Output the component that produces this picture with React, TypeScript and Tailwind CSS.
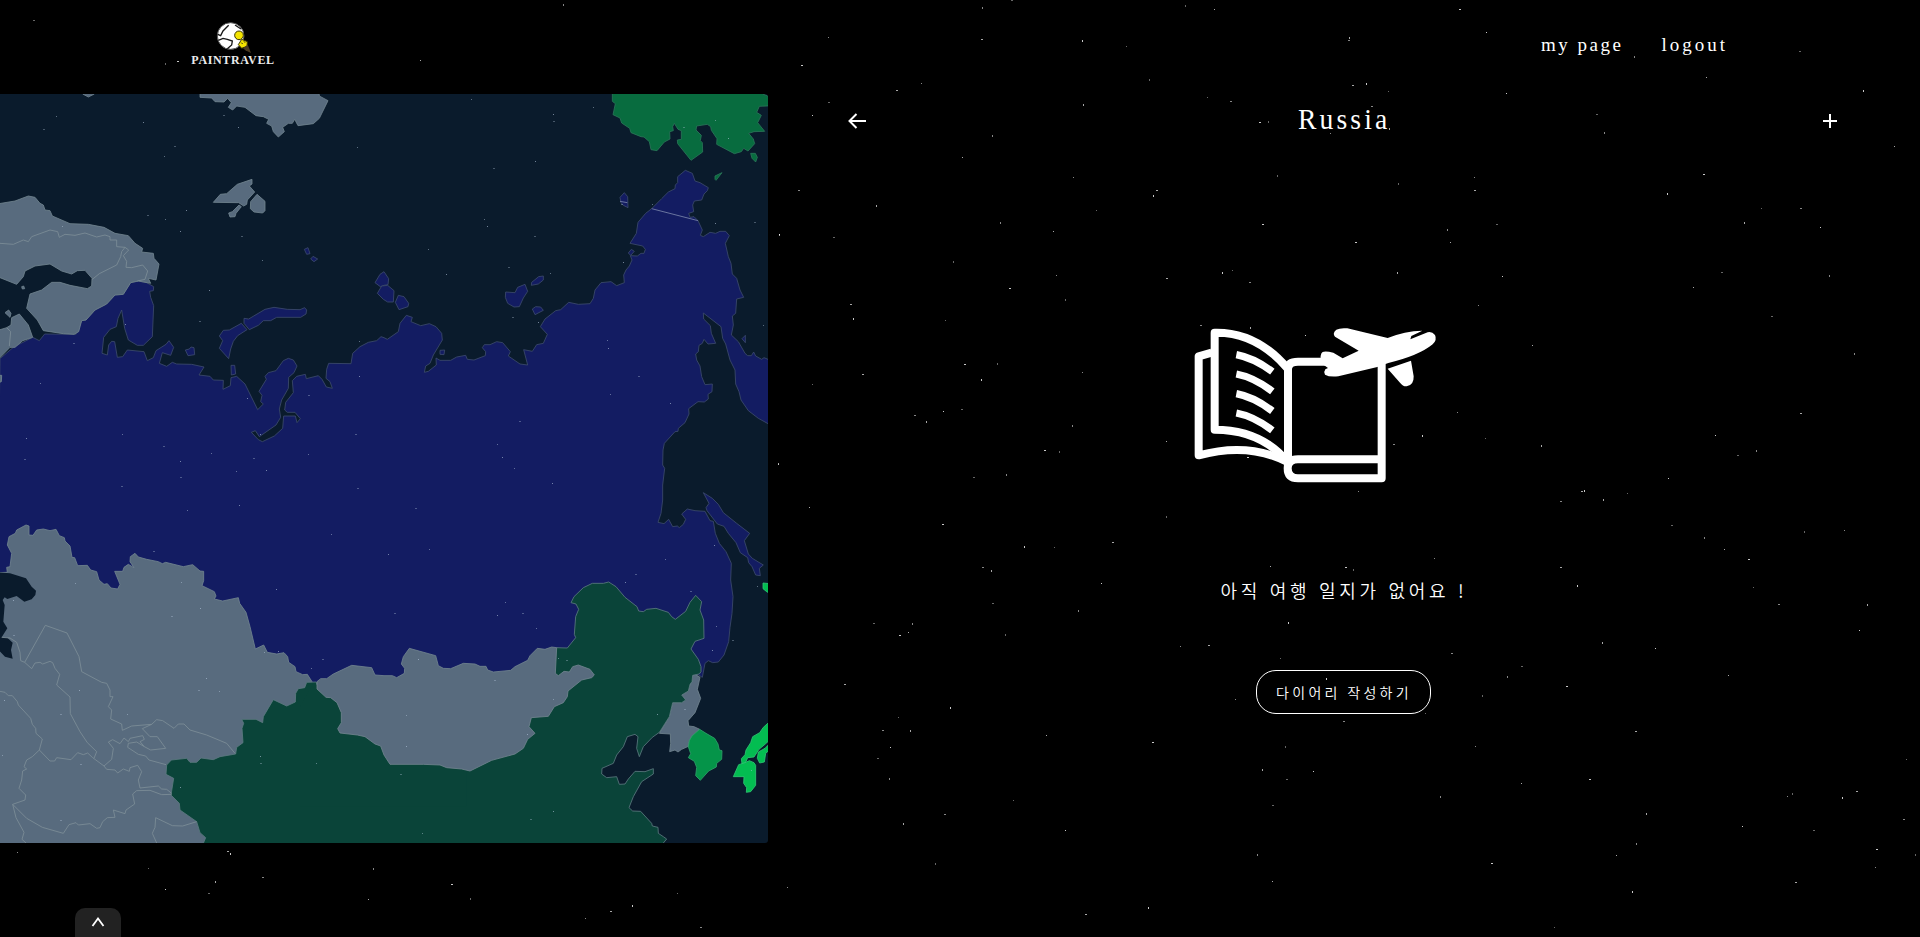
import React from "react";

type Point = [number, number];

// Sky sectors: each keeps its own grid, projected on the page by an origin and a scale.
const skySectors: { origin: Point; scale: Point; stars: string }[] = [
  {
    origin: [768, 0],
    scale: [0.7347, 0.3333],
    stars:
      "332,1 292,24 608,28 941,28 568,17 82,112 290,120 428,123 488,139 790,121 792,113 978,97 1404,155 1179,169 1278,232 46,197 519,239 209,250 175,272 1491,273 598,292 629,306 429,314 61,346 83,308 306,407 265,472 669,368 681,365 765,401 795,256 814,250 844,274 821,321 846,386 1005,281 1127,345 1138,397 1533,439 1273,524 694,527 416,533 529,572 525,588 447,632 41,573 147,616 16,703 89,714 316,668 388,696 673,673 858,551 962,532 962,573 1224,582 1352,626 1405,627 1329,669 1432,683 992,675 925,690 929,728 799,728 253,785 392,826 543,835 619,818 632,813 656,848 857,819 1000,831 1298,819 1445,827 1260,864 329,867 405,899 967,916 112,914 116,957 241,963 589,978 657,984 732,1006 1366,951 1479,1061 1041,1038 268,1094 313,1092 428,1117 128,1125 291,1139 61,1154 200,1247 216,1264 239,1235 263,1230 415,1278 543,1325 377,1352 397,1356 939,1237 1406,1241 891,1308 977,1317 851,1333 1053,1338 1290,1308 1320,1366 1346,1353 14,1392 652,1373",
  },
  {
    origin: [768, 468],
    scale: [0.7347, 0.3333],
    stars:
      "280,28 325,20 57,118 238,171 543,145 804,70 1107,70 1112,69 1170,76 1079,102 1137,96 1226,31 1230,172 1275,208 1302,245 1334,275 1411,191 1465,189 469,223 349,236 390,239 292,298 304,309 454,346 305,406 423,427 684,297 786,299 797,304 907,271 1078,298 1102,354 1342,358 1376,410 1497,410 1486,488 143,467 196,466 191,493 179,503 323,499 562,537 600,534 709,464 697,571 930,556 1136,524 1208,543 1025,597 1007,625 1307,623 1087,655 972,684 636,694 104,649 249,718 177,750 156,788 194,787 167,840 149,872 166,932 379,804 524,823 704,837 963,837 1181,790 760,632 895,738 783,762 673,905 743,912 706,934 915,987 1025,948 1118,936 1394,977 1388,987 1481,970 1462,989 1549,876 1546,1055 1196,1038 1326,1077 1423,1088 1182,1126 1155,1162 1509,1144 1562,1160 1507,1199 1398,1245 1177,1271 334,998 240,1040 184,1066 405,1088 687,1014 666,1160 686,1241 985,1188 228,1188 27,1260 432,1339 518,1318 1071,1378",
  },
  {
    origin: [0, 0],
    scale: [1, 1],
    stars:
      "33,20 563,4 420,60 177,61 165,63 17,852 227,851 230,853 148,868 262,877 215,881 165,889 208,893 373,868 368,899 451,884 470,898 585,918 610,911 632,905 677,893 700,927 779,234 778,464",
  },
];

const mapStars =
  "129,118 168,79 430,97 523,170 493,198 716,111 670,76 1071,172 560,361 442,375 496,389 541,425 724,439 787,511 628,600 598,694 188,409 377,704 219,759 121,880 743,926 925,916 1078,755 1078,858 1066,1033 925,1094 780,1032 761,1104 634,1089 540,1114 489,1069 367,1033 80,1044 74,1107 1414,27 1661,72 1661,93 1781,51 1605,214 1479,236 1453,387 1461,409 1604,438 1284,478 1339,554 1525,533 1652,550 1870,517 1864,343 1957,343 2145,400 2264,397 2289,706 1614,698 1537,682 1821,750 1824,774 1916,858 1830,912 2011,940 1557,995 1492,1063 1507,1103 2050,113 2145,91 2185,144 541,1162 710,1145 798,1142 365,1190 562,1260 718,1247 1071,1194 993,1334 829,1498 459,1385 544,1477 600,1554 515,1579 226,1480 39,1531 39,1636 793,1687 836,1684 966,1709 933,1735 619,1765 595,1801 658,1804 238,1801 182,1874 383,1873 14,1831 242,2023 8,1997 782,1998 780,2021 949,2020 541,2093 181,2191 1543,1135 1657,1179 1247,1254 1289,1379 1164,1393 1183,1571 1515,1538 1492,1577 1567,1571 1608,1614 1876,1477 1906,1453 1996,1407 2144,1365 2072,1505 2150,1610 2138,1680 2197,1651 2272,1490 1255,1708 1484,1771 1218,1875 1218,1969 1200,2053 1659,1829 1582,1933 1699,1712 1675,1705 1973,1872 2054,1859 2253,2040 1659,2163 1591,2188 1268,2230";

const parse = (list: string): Point[] =>
  list.split(" ").map((pair) => pair.split(",").map(Number) as Point);

const russia =
  "0,806 40,772 98,742 118,752 134,732 228,733 245,692 258,690 285,660 320,642 345,615 370,613 392,578 415,573 440,578 461,590 460,602 449,604 452,622 461,647 457,740 430,766 412,766 385,750 374,715 365,660 354,685 349,710 330,718 311,742 306,790 322,795 326,765 335,754 344,755 352,802 368,800 382,780 432,785 442,812 460,803 468,782 498,763 507,752 521,772 512,796 487,788 478,820 500,829 517,817 530,822 575,823 612,831 597,855 630,859 640,870 670,871 669,898 691,887 693,863 710,859 735,882 773,959 790,942 782,935 786,916 777,904 799,868 795,859 805,848 828,842 850,812 865,805 880,810 891,828 882,848 866,862 865,895 845,930 838,957 842,982 828,1005 778,1040 766,1022 754,1027 775,1049 787,1055 823,1038 848,1015 851,978 886,978 891,998 901,986 885,967 862,967 854,960 857,937 880,908 877,872 890,859 916,853 919,866 955,857 966,868 979,891 997,895 990,875 978,865 980,838 986,820 1053,821 1058,790 1080,770 1105,757 1130,752 1143,740 1152,743 1162,748 1195,725 1200,700 1219,676 1237,682 1233,695 1262,707 1288,701 1308,710 1325,730 1327,750 1300,795 1290,820 1277,828 1273,847 1285,844 1309,825 1308,804 1320,811 1352,811 1370,801 1397,796 1402,808 1422,810 1456,797 1457,785 1447,773 1453,764 1470,764 1490,755 1508,758 1531,785 1525,798 1560,822 1583,825 1571,779 1597,784 1610,764 1630,760 1642,733 1621,710 1635,687 1667,662 1682,659 1706,637 1735,643 1770,641 1780,625 1785,600 1803,578 1833,575 1850,587 1873,578 1871,555 1878,540 1888,528 1896,510 1891,497 1912,498 1923,490 1932,490 1936,478 1928,468 1890,460 1909,430 1914,397 1937,370 1955,356 1985,326 2005,306 2025,296 2026,285 2033,278 2033,260 2056,241 2077,250 2085,273 2100,278 2125,293 2122,302 2112,312 2105,330 2083,333 2078,345 2081,365 2066,370 2070,382 2082,380 2094,392 2107,420 2101,436 2110,440 2130,427 2147,430 2160,424 2177,424 2188,437 2176,460 2185,500 2193,520 2197,552 2210,565 2220,600 2231,622 2210,627 2207,670 2197,678 2200,705 2194,735 2215,755 2235,790 2243,797 2254,797 2261,786 2267,798 2285,808 2292,803 2304,808 2320,808 2320,1010 2304,1001 2275,985 2245,962 2223,930 2217,905 2207,882 2205,840 2190,810 2177,762 2168,745 2163,710 2110,669 2111,687 2131,707 2134,730 2147,760 2124,762 2112,748 2107,760 2097,766 2095,785 2087,792 2090,810 2100,828 2105,860 2115,884 2137,882 2136,905 2124,913 2125,927 2113,936 2094,935 2066,956 2067,972 2055,998 2035,1015 2034,1024 2025,1025 1993,1060 1989,1080 1988,1125 1994,1135 1988,1185 1988,1230 1983,1270 1974,1297 1992,1301 2006,1288 2018,1310 2032,1308 2038,1313 2050,1303 2057,1288 2045,1272 2062,1257 2085,1262 2115,1264 2130,1292 2140,1294 2146,1330 2158,1360 2178,1385 2194,1420 2192,1470 2199,1520 2196,1570 2190,1612 2186,1655 2172,1695 2155,1716 2138,1718 2125,1712 2115,1720 2107,1762 2096,1755 1900,1750 1100,1800 900,1800 -9,1500";

const russianIslands = [
  "732,685 746,687 795,658 822,652 862,658 900,659 914,653 920,660 918,672 902,682 830,682 812,692 790,692 775,706 748,719 732,700",
  "658,738 670,721 688,720 724,700 741,719 713,737 700,754 692,777 686,806 658,775 668,752",
  "556,780 568,777 573,771 582,773 584,794 564,797",
  "693,826 704,826 707,852 694,855",
  "913,478 924,473 930,491 920,493",
  "932,507 939,499 953,507 942,515",
  "1125,578 1140,553 1152,545 1166,566 1164,584 1152,586 1141,590",
  "1145,588 1163,586 1182,602 1180,636 1163,636 1150,628 1132,610",
  "1195,616 1212,620 1226,640 1224,650 1197,659 1186,637",
  "1517,606 1545,608 1553,592 1575,583 1583,604 1570,624 1558,650 1542,651 1523,640 1516,622",
  "1595,577 1616,560 1630,558 1630,570 1615,582 1594,586",
  "1597,657 1607,650 1622,651 1630,661 1605,674",
  "1860,322 1873,308 1883,320 1884,353 1870,346 1863,338",
  "1885,489 1894,478 1903,484 1892,496",
  "1320,781 1334,780 1332,794 1320,793",
  "2226,746 2236,736 2236,758",
  "2110,1208 2137,1225 2155,1243 2170,1268 2210,1300 2249,1330 2233,1352 2245,1392 2257,1405 2290,1425 2278,1435 2281,1457 2267,1455 2256,1430 2246,1418 2243,1403 2221,1388 2208,1358 2185,1330 2172,1309 2152,1302 2121,1262 2118,1253 2127,1240",
];

const china =
  "920,1777 949,1776 951,1790 1100,1850 1250,1960 1400,1950 1670,1673 1702,1674 1727,1643 1723,1633 1727,1580 1736,1558 1728,1542 1713,1538 1722,1520 1750,1493 1777,1480 1810,1480 1826,1476 1848,1490 1875,1522 1911,1550 1916,1563 1930,1565 1940,1558 1968,1555 2005,1567 2015,1580 2026,1588 2057,1564 2070,1537 2087,1516 2105,1535 2100,1560 2111,1590 2112,1645 2085,1654 2073,1677 2095,1708 2103,1730 2103,1745 2098,1752 2078,1756 2076,1775 2070,1783 2065,1803 2045,1815 2057,1830 2045,1838 2018,1838 2008,1880 1978,1927 1957,1942 1930,1970 1918,2000 1910,1975 1914,1940 1905,1933 1882,1940 1870,1970 1850,1995 1840,2020 1806,2035 1805,2052 1820,2063 1850,2060 1858,2083 1875,2082 1885,2067 1905,2044 1935,2045 1960,2036 1960,2052 1925,2075 1900,2120 1887,2153 1898,2163 1922,2164 1955,2200 1957,2208 1974,2212 1975,2230 1990,2240 2000,2247 1985,2265 608,2265 617,2243 600,2228 590,2195 540,2160 538,2140 513,2115 521,2065 498,2053 500,2025 514,2010 560,2005 570,2017 590,2017 603,2004 640,2009 660,2000 707,1992 710,1972 729,1958 726,1915 731,1900 725,1888 768,1888 788,1898 790,1880 820,1829 860,1848 886,1836 887,1810 895,1796 914,1793";

const mongolia =
  "951,1775 962,1766 980,1766 1000,1752 1055,1726 1115,1733 1125,1755 1152,1757 1177,1757 1190,1763 1213,1750 1214,1735 1204,1722 1210,1700 1228,1675 1307,1697 1315,1727 1330,1735 1352,1736 1390,1720 1425,1722 1440,1729 1458,1729 1463,1740 1480,1746 1532,1741 1545,1730 1583,1711 1590,1697 1612,1675 1635,1678 1655,1671 1670,1673 1666,1750 1675,1757 1692,1744 1708,1746 1718,1730 1735,1725 1770,1738 1783,1755 1775,1763 1745,1770 1704,1803 1702,1820 1690,1838 1663,1850 1645,1879 1594,1883 1587,1910 1605,1930 1583,1948 1570,1975 1545,1992 1475,2011 1410,2043 1385,2037 1340,2033 1320,2025 1270,2023 1170,2023 1152,1995 1142,1968 1125,1962 1095,1940 1072,1935 1020,1929 1013,1916 1024,1898 1024,1868 1011,1838 992,1823 978,1822 951,1797";

// Lies under the southern edge of Mongolia so both borders meet without a gap.
const northChina = "940,1780 1100,1850 1400,1900 1400,2150 900,2150 900,1850";

const centralAsia =
  "-9,1448 22,1447 20,1432 30,1430 35,1390 22,1365 27,1340 46,1330 50,1320 78,1305 87,1308 87,1335 99,1336 110,1320 130,1317 150,1322 168,1318 178,1337 193,1343 195,1353 210,1368 216,1402 224,1403 233,1427 262,1426 272,1440 290,1445 297,1470 312,1483 322,1481 333,1494 353,1497 360,1483 344,1444 368,1444 372,1432 385,1423 402,1433 390,1415 391,1400 405,1390 415,1401 440,1408 475,1415 487,1421 497,1417 550,1430 578,1424 600,1443 611,1444 611,1472 606,1487 643,1505 648,1518 643,1527 668,1533 715,1523 719,1540 738,1567 750,1610 766,1677 791,1665 802,1687 830,1692 852,1688 863,1700 866,1717 885,1730 888,1745 908,1754 922,1753 936,1775 922,1800 900,1860 700,2020 560,2050 640,2265 -9,2265";

const paleLands = [
  "-9,342 45,333 85,318 105,322 120,340 130,345 135,360 150,362 157,378 210,401 265,403 312,412 345,430 385,437 405,460 428,475 425,486 460,490 462,505 477,522 468,570 445,565 452,580 415,573 392,578 370,613 345,615 320,642 285,660 258,690 245,692 236,725 222,733 190,731 130,722 112,690 80,655 90,612 125,600 155,577 180,577 210,586 262,596 275,588 276,565 255,541 232,542 215,552 185,543 150,522 105,528 75,543 70,560 50,583 0,563 -9,563",
  "-9,812 30,772 45,772 68,752 98,742 85,705 58,672 35,683 33,705 20,713 -9,722",
  "15,668 26,660 33,670 30,682",
  "65,590 71,588 74,596 67,597",
  "-9,856 5,856 4,875 -9,880",
  "600,-9 600,22 635,24 645,35 672,36 683,25 694,38 685,52 698,60 710,48 735,52 768,77 790,80 806,88 800,100 815,108 820,125 835,141 853,125 848,112 865,100 877,100 884,88 894,107 940,101 958,85 984,32 958,18 955,-9",
  "245,-9 248,12 265,21 283,12 283,-9",
  "640,337 661,313 680,311 712,283 756,268 756,282 748,288 764,306 742,330 740,343 731,348 716,338",
  "717,345 724,350 708,370 705,380 690,381 686,369 697,365",
  "771,313 795,334 795,362 788,369 762,366 751,356 752,335",
  "2078,1756 2085,1753 2100,1762 2092,1798 2102,1825 2085,1868 2064,1892 2066,1908 2082,1910 2099,1918 2076,1938 2066,1960 2067,1968 2045,1978 2034,1986 2025,1980 2009,1985 2012,1960 2011,1932 1978,1930 2008,1880 2018,1838 2045,1838 2057,1830 2045,1815 2065,1803 2070,1783 2076,1775",
];

const caspian =
  "-9,1447 30,1450 78,1465 95,1490 108,1502 106,1515 95,1528 73,1535 50,1518 22,1527 14,1522 8,1530 14,1545 10,1595 22,1615 5,1642 22,1643 38,1658 33,1680 38,1706 15,1700 -9,1675";

const borders = [
  "0,460 40,463 70,450 85,455 95,440 150,420 173,425 178,442 195,433 225,436 255,429 290,441 315,435 330,440 330,450 350,450 350,470 375,472 386,480 370,497 380,514 378,532 395,533 428,525 443,543 435,568 412,573",
  "277,568 298,551 350,525 362,500 365,485 375,472",
  "20,713 32,725 28,768",
  "5,1642 30,1644 50,1657 60,1687 62,1712 74,1717 95,1736 105,1719 120,1717 128,1722 150,1714 158,1718 165,1735 179,1753 170,1785 210,1821 211,1871 240,1925 262,1958 290,1985 282,2005",
  "74,1717 136,1606 201,1629 237,1700 245,1745 305,1777 320,1780 330,1800 330,1820 339,1820 325,1850 335,1860 332,1887 365,1902 367,1921 395,1908 455,1903 470,1889 488,1892 522,1915 535,1902 552,1902 570,1920 620,1935 680,1960 705,1990",
  "0,1804 15,1807 25,1817 37,1817 52,1835 55,1845 92,1885 97,1903 107,1915 108,1930 127,1947 118,1980 97,2000 80,2010 72,2030 80,2037 68,2043 65,2070 57,2095 77,2115 75,2130 38,2143 48,2183 72,2227 66,2248 78,2259",
  "118,1980 150,2013 164,2013 170,2003 213,2009 233,1988 250,1994 263,1989 278,2003 312,2028 320,2038 345,2040 353,2049 370,2037 388,2044 390,2033 413,2026 425,2045 415,2070 420,2094 475,2088 485,2097 500,2098 515,2110",
  "312,2028 335,2008 340,1975 325,1956 338,1949 360,1961 372,1944 385,1955 390,1945 428,1937 433,1948 420,1955 433,1970 410,1956 385,1960 383,1972 415,1993 437,1998 447,2010 498,2024",
  "455,1903 427,1916 450,1940 472,1940 497,1975 452,1980 433,1970",
  "38,2143 80,2185 127,2212 190,2230 207,2204 228,2198 235,2205 270,2201 290,2215 300,2213 308,2195 322,2183 345,2182 340,2160 375,2171 378,2160 404,2142 398,2112 410,2102 450,2101 485,2114 515,2113",
  "470,2259 457,2230 465,2212 467,2183 517,2207 548,2208 590,2195",
];

const alaska = [
  "1837,-9 1837,34 1846,41 1839,74 1860,84 1865,99 1889,115 1893,128 1923,140 1932,141 1948,155 1953,179 1971,182 1993,156 2010,147 2009,125 2020,122 2018,110 2023,100 2034,118 2044,122 2044,148 2032,150 2033,161 2073,211 2108,186 2107,158 2101,152 2104,136 2088,120 2090,108 2122,103 2132,110 2134,121 2151,146 2150,163 2203,191 2224,185 2231,175 2244,183 2264,161 2260,147 2246,130 2262,125 2294,124 2273,98 2284,76 2270,67 2278,49 2320,47 2320,25 2288,12 2288,-9",
  "2145,258 2166,248 2148,271 2145,268",
  "2252,190 2266,190 2272,202 2267,216 2256,205",
];

const southKorea =
  "2099,1918 2118,1930 2144,1945 2154,1962 2158,1980 2166,1982 2165,2008 2150,2020 2149,2031 2126,2043 2101,2071 2087,2057 2090,2032 2083,2014 2065,2003 2072,1991 2065,1970 2068,1952 2076,1938";

const japan = [
  "2320,1885 2290,1912 2279,1928 2258,1940 2252,1958 2238,1980 2235,1994 2224,2006 2226,2022 2237,2017 2243,2003 2262,2001 2277,1978 2296,1962 2320,1940",
  "2320,1950 2295,1975 2275,1986 2272,2005 2279,2019 2293,2016 2297,1990 2320,1970",
  "2216,2024 2235,2018 2248,2012 2262,2018 2267,2026 2267,2086 2252,2105 2239,2107 2240,2093 2231,2080 2232,2060 2200,2060",
  "2289,1479 2320,1482 2320,1516 2300,1505 2289,1496",
];

function StarField() {
  return (
    <svg className="pointer-events-none absolute inset-0" width="1920" height="937" viewBox="0 0 1920 937" aria-hidden>
      {skySectors.flatMap((sector, s) =>
        parse(sector.stars).map(([x, y], i) => (
          <rect
            key={`${s}-${i}`}
            x={Math.floor(sector.origin[0] + x * sector.scale[0])}
            y={Math.floor(sector.origin[1] + y * sector.scale[1])}
            width={i % 3 === 0 ? 2 : 1}
            height={i % 3 === 1 ? 2 : 1}
            fill="#fff"
            fillOpacity={0.4 + (i % 4) * 0.13}
          />
        )),
      )}
    </svg>
  );
}

function WorldMap() {
  return (
    <svg className="block" width="768" height="749" viewBox="0 12 2304 2247">
      <rect x="0" y="12" width="2304" height="2247" fill="#0a1b2c" />
      <g strokeWidth="2.5" strokeLinejoin="round">
        <g fill="#131c62" stroke="#3c4a6c">
          <polygon points={russia} />
          {russianIslands.map((p) => (
            <polygon key={p} points={p} />
          ))}
          <path d="M1955 356L2094 392M1860 334L1882 338" stroke="#69749f" strokeWidth="3" />
        </g>
        <g fill="#586b7e" stroke="#71848f">
          {paleLands.map((p) => (
            <polygon key={p} points={p} />
          ))}
          <polygon points={centralAsia} />
        </g>
        <polygon points={caspian} fill="#0a1b2c" />
        <polygon points={china} fill="#0a4439" stroke="#5c7a80" />
        <polygon points={northChina} fill="#0a4439" />
        <polygon points={mongolia} fill="#586b7e" stroke="#71848f" />
        <g fill="none" stroke="#7d8e98">
          {borders.map((p) => (
            <polyline key={p} points={p} />
          ))}
        </g>
        <g fill="#086c3f" stroke="#2b7659">
          {alaska.map((p) => (
            <polygon key={p} points={p} />
          ))}
        </g>
        <polygon points={southKorea} fill="#059449" stroke="#2fa069" />
        <g fill="#03bd51" stroke="#2fc774">
          {japan.map((p) => (
            <polygon key={p} points={p} />
          ))}
        </g>
      </g>
      <g fill="#b9cbe0">
        {parse(mapStars).map(([x, y], i) => (
          <rect
            key={i}
            x={Math.floor(x / 3) * 3}
            y={Math.floor(y / 3) * 3}
            width={i % 3 === 0 ? 6 : 3}
            height="3"
            fillOpacity={0.35 + (i % 3) * 0.12}
          />
        ))}
      </g>
    </svg>
  );
}

function Logo() {
  return (
    <a className="flex w-[84px] flex-col items-center pt-[21px]">
      <svg width="36" height="32" viewBox="0 0 108 96">
        <circle cx="47" cy="45" r="40" fill="#fff" stroke="#555" strokeWidth="3" />
        <g fill="none" stroke="#161616" strokeWidth="4">
          <path d="M41 13L24 30L17 44L8 40M10 58L24 52L37 55L52 60L50 72L37 83M60 12L78 24" />
        </g>
        <circle cx="72" cy="43" r="13" fill="#f5e400" stroke="#3b3600" strokeWidth="3" />
        <path d="M70 71L80 55L97 62L96 76L80 82Z" fill="#f5e400" stroke="#3b3600" strokeWidth="3" />
        <path d="M84 82L98 71L103 83L108 96L91 88Z" fill="#4a3a22" />
        <path d="M79 65l4 4M87 61l3 4" stroke="#222" strokeWidth="3" />
      </svg>
      <span className="-mt-px font-['Liberation_Serif',serif] text-[12px] leading-[17px] font-bold tracking-[0.65px] whitespace-nowrap text-[#ececec]">
        PAINTRAVEL
      </span>
    </a>
  );
}

function DiaryIcon() {
  return (
    <svg width="244" height="158" viewBox="72 80 732 474" fill="none" stroke="#fff" strokeLinejoin="round">
      <g strokeWidth="24">
        <path d="M134 97Q260 94 354 206V486Q274 388 134 388Z" />
        <path d="M125 157L86 168V465Q236 424 354 486" />
        <path d="M354 486V206Q354 184 384 184H480" />
        <path d="M635 190V534H384Q353 534 353 504Q353 477 384 477H635" />
      </g>
      <g strokeWidth="22" strokeLinejoin="miter">
        <path d="M199 163Q252 173 307 214M199 221Q252 231 307 273M199 280Q252 290 307 332M199 338Q252 348 307 390" />
      </g>
      <g fill="#fff" stroke="none">
        <path d="M499 88Q510 82 532 84L653 113Q704 92 757 91L724 107L721 117L773 96Q786 93 795 104Q802 119 788 132Q747 166 655 188L622 200L505 228Q478 231 465 223Q460 215 466 207L474 203L453 188Q449 160 458 155Q466 151 490 157L518 174L566 151L495 109Q486 99 499 88Z" />
        <path d="M653 205L723 181L731 228Q732 255 710 258Q699 259 690 247Z" />
      </g>
    </svg>
  );
}

export default function App() {
  return (
    <div className="relative flex h-[937px] w-[1920px] flex-col overflow-hidden bg-black text-white">
      <StarField />
      <header className="flex h-[94px] items-start justify-between pr-[192px] pl-[191px]">
        <Logo />
        <nav className="flex gap-[38px] pt-[33px] font-['Liberation_Serif',serif] text-[19px] leading-6 tracking-[2.5px]">
          <a>my page</a>
          <a className="tracking-[3px]">logout</a>
        </nav>
      </header>
      <main className="flex h-[749px]">
        <section className="w-[768px] overflow-hidden rounded-r-[3px]">
          <WorldMap />
        </section>
        <section className="flex w-[1152px] flex-col items-center">
          <div className="flex h-[54px] w-full items-center justify-between pr-[82px] pl-[80px]">
            <svg width="18" height="16" viewBox="0 0 18 16" fill="none" stroke="#fff" strokeWidth="2">
              <path d="M18 8H1.5M8.5 1L1.5 8L8.5 15" />
            </svg>
            <h1 className="scale-x-92 pb-[5px] font-['Liberation_Serif',serif] text-[30px] leading-9 tracking-[3.4px]">
              Russia
            </h1>
            <svg width="16" height="16" viewBox="0 0 16 16" fill="none" stroke="#fff" strokeWidth="2">
              <path d="M8 1V15M1 8H15" />
            </svg>
          </div>
          <div className="mt-[179px] mr-[56px]">
            <DiaryIcon />
          </div>
          <p className="mt-[91px] font-['Noto_Sans_CJK_KR',sans-serif] text-[18px] leading-7 font-[350] tracking-[3.7px] whitespace-nowrap [word-spacing:1px]">
            아직 여행 일지가 없어요 !
          </p>
          <button className="mt-[66px] mr-0.5 flex h-[44px] w-[175px] items-center justify-center rounded-[20px] border border-white pl-0.5 font-['Noto_Sans_CJK_KR',sans-serif] text-[14px] font-[350] tracking-[3.3px] whitespace-nowrap">
            다이어리 작성하기
          </button>
        </section>
      </main>
      <footer className="mt-auto flex pl-[75px]">
        <button className="flex h-[29px] w-[46px] items-center justify-center rounded-t-[10px] bg-[#222] pb-px">
          <svg width="14" height="10" viewBox="0 0 14 10" fill="none" stroke="#fff" strokeWidth="1.8">
            <path d="M1.5 9L7 1.5L12.5 9" />
          </svg>
        </button>
      </footer>
    </div>
  );
}
